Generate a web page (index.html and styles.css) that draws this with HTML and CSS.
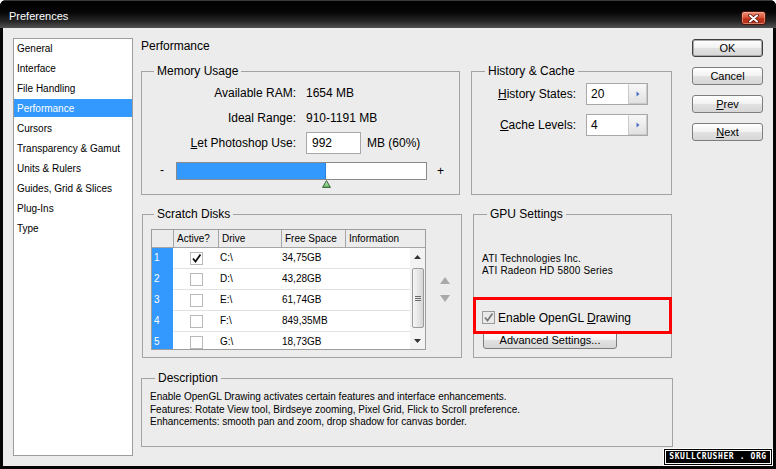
FILE: index.html
```html
<!DOCTYPE html>
<html>
<head>
<meta charset="utf-8">
<title>Preferences</title>
<link rel="stylesheet" href="styles.css">
</head>
<body>
<div class="window">
  <div class="titlebar">
    <span class="title">Preferences</span>
    <span class="close">
      <svg width="11" height="9" viewBox="0 0 11 9">
        <path d="M2 1.5 L9 7.5 M9 1.5 L2 7.5" stroke="#5a1608" stroke-width="3.6" stroke-linecap="round"/>
        <path d="M2 1.5 L9 7.5 M9 1.5 L2 7.5" stroke="#ffffff" stroke-width="2" stroke-linecap="round"/>
      </svg>
    </span>
  </div>
  <div class="client">
    <ul class="nav">
      <li>General</li>
      <li>Interface</li>
      <li>File Handling</li>
      <li class="sel">Performance</li>
      <li>Cursors</li>
      <li>Transparency &amp; Gamut</li>
      <li>Units &amp; Rulers</li>
      <li>Guides, Grid &amp; Slices</li>
      <li>Plug-Ins</li>
      <li>Type</li>
    </ul>

    <div class="main">
      <div class="heading">Performance</div>

      <div class="row row1">
        <fieldset class="group mem">
          <legend>Memory Usage</legend>
          <div class="mem-grid">
            <span class="mlabel">Available RAM:</span><span class="mval">1654 MB</span>
            <span class="mlabel">Ideal Range:</span><span class="mval">910-1191 MB</span>
            <span class="mlabel"><u>L</u>et Photoshop Use:</span>
            <span class="mval"><span class="input">992</span><span class="unit">MB (60%)</span></span>
          </div>
          <div class="slider-row">
            <span class="minus">-</span>
            <div class="track">
              <div class="fill" style="width:60%"></div>
              <svg class="thumb" width="9" height="8" viewBox="0 0 9 8">
                <defs>
                  <linearGradient id="tg" x1="0" y1="0" x2="0" y2="1">
                    <stop offset="0" stop-color="#e8f8e4"/>
                    <stop offset="1" stop-color="#4fb84f"/>
                  </linearGradient>
                </defs>
                <polygon points="4.5,0.6 8.4,7.4 0.6,7.4" fill="url(#tg)" stroke="#3b5e3b" stroke-width="1"/>
              </svg>
            </div>
            <span class="plus">+</span>
          </div>
        </fieldset>

        <fieldset class="group hist">
          <legend>History &amp; Cache</legend>
          <div class="hist-body">
            <div class="field-row">
              <span class="flabel"><u>H</u>istory States:</span>
              <span class="spin"><span class="spin-val">20</span><span class="spin-btn"><svg width="4" height="6" viewBox="0 0 4 6"><polygon points="0.5,0.5 3.5,3 0.5,5.5" fill="#4c6fc4"/></svg></span></span>
            </div>
            <div class="field-row">
              <span class="flabel"><u>C</u>ache Levels:</span>
              <span class="spin"><span class="spin-val">4</span><span class="spin-btn"><svg width="4" height="6" viewBox="0 0 4 6"><polygon points="0.5,0.5 3.5,3 0.5,5.5" fill="#4c6fc4"/></svg></span></span>
            </div>
          </div>
        </fieldset>
      </div>

      <div class="row row2">
        <fieldset class="group scratch">
          <legend>Scratch Disks</legend>
          <div class="scratch-body">
            <div class="table">
              <div class="thead">
                <span></span><span>Active?</span><span>Drive</span><span>Free Space</span><span>Information</span>
              </div>
              <div class="tbody">
                <div class="rows">
                  <div class="tr"><span class="num">1</span><span class="chk"><span class="cb"><svg width="11" height="11" viewBox="0 0 11 11"><path d="M2 5.5 L4.5 8.5 L9.5 1.5" fill="none" stroke="#111" stroke-width="1.8"/></svg></span></span><span class="drv">C:\</span><span class="free">34,75GB</span><span></span></div>
                  <div class="tr"><span class="num">2</span><span class="chk"><span class="cb"></span></span><span class="drv">D:\</span><span class="free">43,28GB</span><span></span></div>
                  <div class="tr"><span class="num">3</span><span class="chk"><span class="cb"></span></span><span class="drv">E:\</span><span class="free">61,74GB</span><span></span></div>
                  <div class="tr"><span class="num">4</span><span class="chk"><span class="cb"></span></span><span class="drv">F:\</span><span class="free">849,35MB</span><span></span></div>
                  <div class="tr"><span class="num">5</span><span class="chk"><span class="cb"></span></span><span class="drv">G:\</span><span class="free">18,73GB</span><span></span></div>
                </div>
                <div class="vscroll">
                  <span class="sb-btn"><svg width="7" height="4" viewBox="0 0 7 4"><polygon points="3.5,0 7,4 0,4" fill="#333"/></svg></span>
                  <span class="sb-thumb"><svg width="6" height="5" viewBox="0 0 6 5"><path d="M0 0.5 H6 M0 2.5 H6 M0 4.5 H6" stroke="#6a6a6a" stroke-width="1"/></svg></span>
                  <span class="sb-space"></span>
                  <span class="sb-btn"><svg width="7" height="4" viewBox="0 0 7 4"><polygon points="0,0 7,0 3.5,4" fill="#333"/></svg></span>
                </div>
              </div>
            </div>
            <div class="move">
              <svg width="10" height="7" viewBox="0 0 10 7"><polygon points="5,0 10,7 0,7" fill="#a9a9a9"/></svg>
              <svg width="10" height="7" viewBox="0 0 10 7"><polygon points="0,0 10,0 5,7" fill="#a9a9a9"/></svg>
            </div>
          </div>
        </fieldset>

        <fieldset class="group gpu">
          <legend>GPU Settings</legend>
          <div class="gpu-body">
            <div class="gpu-info">ATI Technologies Inc.<br>ATI Radeon HD 5800 Series</div>
            <div class="gl-row">
              <span class="highlight"></span>
              <span class="cb dis"><svg width="11" height="11" viewBox="0 0 11 11"><path d="M2 5.5 L4.5 8.5 L9.5 1.5" fill="none" stroke="#7b7b7b" stroke-width="1.8"/></svg></span>
              <span class="gl-label">Enable OpenGL <u>D</u>rawing</span>
            </div>
            <span class="btn adv">Advanced Settings...</span>
          </div>
        </fieldset>
      </div>

      <fieldset class="group desc">
        <legend>Description</legend>
        <div class="desc-body">
          Enable OpenGL Drawing activates certain features and interface enhancements.<br>
          Features: Rotate View tool, Birdseye zooming, Pixel Grid, Flick to Scroll preference.<br>
          Enhancements: smooth pan and zoom, drop shadow for canvas border.
        </div>
      </fieldset>
    </div>

    <div class="buttons">
      <span class="btn default">OK</span>
      <span class="btn">Cancel</span>
      <span class="btn"><u>P</u>rev</span>
      <span class="btn"><u>N</u>ext</span>
    </div>

    <div class="watermark"><span>SKULLCRUSHER . ORG</span></div>
  </div>
</div>
</body>
</html>
```

FILE: styles.css
```css
* { box-sizing: border-box; }
html, body { margin: 0; padding: 0; }
body {
  width: 776px;
  height: 469px;
  overflow: hidden;
  background: #ffffff;
  font-family: "Liberation Sans", Arial, sans-serif;
  color: #000;
}
u { text-decoration: underline; text-underline-offset: 1px; }

.window {
  width: 776px;
  height: 469px;
  background: #050505;
  border-radius: 6px 6px 0 0;
  display: flex;
  flex-direction: column;
  overflow: hidden;
}

.titlebar {
  height: 28px;
  flex: none;
  display: flex;
  align-items: flex-start;
  justify-content: space-between;
  padding: 0 10px 0 9px;
  background: linear-gradient(#000 0%, #050505 40%, #262626 75%, #525252 100%);
  border-top: 1px solid #3a3a3a;
}
.title {
  color: #fff;
  font-size: 11px;
  line-height: 14px;
  margin-top: 8px;
}
.close {
  margin-top: 10px;
  width: 25px;
  height: 14px;
  border: 1px solid #4a140a;
  border-radius: 3px;
  background: linear-gradient(#ee8f77 0%, #d9553a 45%, #c0331a 55%, #b2301c 100%);
  box-shadow: inset 0 0 0 1px rgba(255, 200, 180, 0.5);
  display: flex;
  align-items: center;
  justify-content: center;
}

.client {
  position: relative;
  flex: 1;
  margin: 0 3px 3px;
  background: #ececec;
  display: flex;
  padding: 10px 0 0 10px;
}

/* left list */
.nav {
  list-style: none;
  margin: 0;
  padding: 0;
  width: 120px;
  height: 418px;
  flex: none;
  background: #fff;
  border: 1px solid #9c9c9c;
  font-size: 10px;
}
.nav li {
  height: 18px;
  line-height: 19px;
  margin-bottom: 2px;
  padding-left: 3px;
  white-space: nowrap;
}
.nav li.sel { background: #3399ff; color: #fff; }

/* main column */
.main {
  width: 532px;
  flex: none;
  margin-left: 8px;
  display: flex;
  flex-direction: column;
}
.heading {
  font-size: 12px;
  line-height: 16px;
  height: 16px;
}
.row { display: flex; }
.row1 { margin-top: 10px; }
.row2 { margin-top: 12px; padding-left: 1px; }

.group {
  margin: 0;
  padding: 0;
  min-width: 0;
  border: 1px solid #a3a3a3;
  position: relative;
}
.group legend {
  font-size: 12px;
  line-height: 14px;
  padding: 0 3px;
  margin-left: 12px;
}

/* memory */
.mem { width: 319px; height: 131px; }
.mem-grid {
  display: grid;
  grid-template-columns: 154px 1fr;
  grid-template-rows: 25px 25px 26px;
  column-gap: 10px;
  align-items: center;
  padding-top: 2px;
  font-size: 12px;
}
.mlabel { text-align: right; white-space: nowrap; }
.mval { display: flex; align-items: center; white-space: nowrap; }
.input {
  display: inline-block;
  width: 55px;
  height: 22px;
  border: 1px solid #a8a8a8;
  background: #fff;
  padding-left: 5px;
  line-height: 20px;
}
.unit { margin-left: 6px; }

.slider-row {
  display: flex;
  align-items: flex-start;
  margin-top: 6px;
  font-size: 12px;
}
.minus { width: 34px; padding-left: 18px; line-height: 17px; }
.plus { margin-left: 10px; line-height: 18px; }
.track {
  position: relative;
  width: 251px;
  height: 18px;
  border: 1px solid #8a8a8a;
  background: #fff;
}
.fill { height: 100%; background: #3399ff; border-right: 1px solid #2a7fd6; }
.thumb {
  position: absolute;
  top: 100%;
  margin-top: 1px;
  left: calc(60% - 4.5px);
  display: block;
}

/* history */
.hist { width: 201px; height: 131px; margin-left: 11px; }
.hist legend { margin-left: 13px; }
.hist-body {
  padding-top: 5px;
  display: flex;
  flex-direction: column;
  gap: 9px;
}
.field-row { display: flex; align-items: center; height: 22px; }
.flabel {
  width: 104px;
  text-align: right;
  margin-right: 10px;
  font-size: 12px;
  white-space: nowrap;
}
.spin {
  width: 62px;
  height: 22px;
  display: flex;
  border: 1px solid #a8a8a8;
  background: #fff;
}
.spin-val { flex: 1; padding-left: 4px; font-size: 12px; line-height: 20px; }
.spin-btn {
  width: 19px;
  border: 1px solid #c9c9c9;
  border-top-color: #f4f4f4;
  background: linear-gradient(#f7f7f7, #e1e1e1);
  display: flex;
  align-items: center;
  justify-content: center;
}
.spin-btn svg { display: block; }

/* scratch disks */
.scratch { width: 320px; height: 151px; }
.scratch legend { margin-left: 11px; }
.scratch-body {
  display: flex;
  align-items: center;
  gap: 14px;
  padding: 8px 0 0 8px;
}
.table {
  width: 275px;
  height: 121px;
  flex: none;
  border: 1px solid #9d9d9d;
  background: #fff;
  display: flex;
  flex-direction: column;
  font-size: 10px;
}
.thead {
  display: grid;
  grid-template-columns: 21px 45px 63px 64px 1fr;
  height: 18px;
  flex: none;
  background: #ececec;
  border-bottom: 1px solid #a5a5a5;
}
.thead span {
  border-left: 1px solid #a5a5a5;
  padding-left: 3px;
  line-height: 17px;
  white-space: nowrap;
}
.thead span:first-child { border-left: 0; }
.tbody { flex: 1; display: flex; overflow: hidden; }
.rows { flex: 1; overflow: hidden; }
.tr {
  display: grid;
  grid-template-columns: 21px 45px 63px 64px 1fr;
  height: 21px;
}
.tr > span {
  border-bottom: 1px solid #e2e2e2;
  line-height: 20px;
  white-space: nowrap;
}
.tr > .num {
  background: #3399ff;
  color: #fff;
  padding-left: 2px;
  border-bottom: 0;
}
.tr > .chk { display: flex; align-items: center; justify-content: center; padding-left: 1px; }
.drv { padding-left: 2px; }
.free { padding-left: 1px; }

.cb {
  width: 13px;
  height: 13px;
  border: 1px solid #b9b9b9;
  background: #fff;
  display: flex;
  align-items: center;
  justify-content: center;
  flex: none;
}
.cb svg { display: block; }
.cb.dis { border-color: #9a9a9a; background: #e9e9e9; }

.vscroll {
  width: 15px;
  flex: none;
  background: #f3f3f3;
  display: flex;
  flex-direction: column;
  align-items: center;
}
.sb-btn {
  height: 17px;
  flex: none;
  display: flex;
  align-items: center;
  justify-content: center;
}
.sb-thumb {
  margin-top: 3px;
  width: 12px;
  height: 60px;
  flex: none;
  border: 1px solid #9b9b9b;
  border-radius: 2px;
  background: linear-gradient(to right, #f6f6f6, #d6d6d6);
  display: flex;
  align-items: center;
  justify-content: center;
}
.sb-space { flex: 1; }

.move {
  display: flex;
  flex-direction: column;
  gap: 11px;
}
.move svg { display: block; }

/* gpu */
.gpu { width: 199px; height: 151px; margin-left: 11px; }
.gpu legend { margin-left: 13px; }
.gpu-body { padding: 32px 0 0 8px; }
.gpu-info { font-size: 10px; line-height: 12px; letter-spacing: 0.2px; }
.gl-row {
  position: relative;
  display: flex;
  align-items: center;
  height: 15px;
  margin-top: 33px;
}
.gl-label { margin-left: 3px; font-size: 12px; white-space: nowrap; }
.highlight {
  position: absolute;
  left: -9px;
  top: -13px;
  width: 199px;
  height: 37px;
  border: 3px solid #ff0000;
}

/* buttons */
.btn {
  display: flex;
  align-items: center;
  justify-content: center;
  height: 18px;
  border: 1px solid #7e7e7e;
  border-radius: 3px;
  background: linear-gradient(#ffffff 0%, #f1f1f1 50%, #e2e2e2 51%, #d6d6d6 100%);
  font-size: 11px;
  white-space: nowrap;
}
.btn.default { border-color: #3f3f3f; box-shadow: inset 0 0 0 1px #a9a9a9; }
.adv { width: 134px; margin-top: 6px; margin-left: 1px; }

.buttons {
  width: 71px;
  flex: none;
  margin-left: 19px;
  padding-top: 1px;
  display: flex;
  flex-direction: column;
  gap: 10px;
}

/* description */
.desc { width: 532px; height: 76px; margin-top: 13px; }
.desc legend { margin-left: 13px; }
.desc-body {
  padding: 6px 0 0 8px;
  font-size: 10px;
  line-height: 12.5px;
}

/* watermark overlay */
.watermark {
  position: absolute;
  right: 0;
  bottom: 0;
  width: 110px;
  height: 18px;
  background: #000;
  border: 1px solid #fff;
  padding: 1px;
}
.watermark span {
  display: block;
  height: 100%;
  border: 1px solid #fff;
  color: #fff;
  font-family: "DejaVu Sans Mono", monospace;
  font-weight: bold;
  font-size: 8px;
  line-height: 12px;
  letter-spacing: 0.6px;
  text-align: center;
  white-space: nowrap;
}
```
